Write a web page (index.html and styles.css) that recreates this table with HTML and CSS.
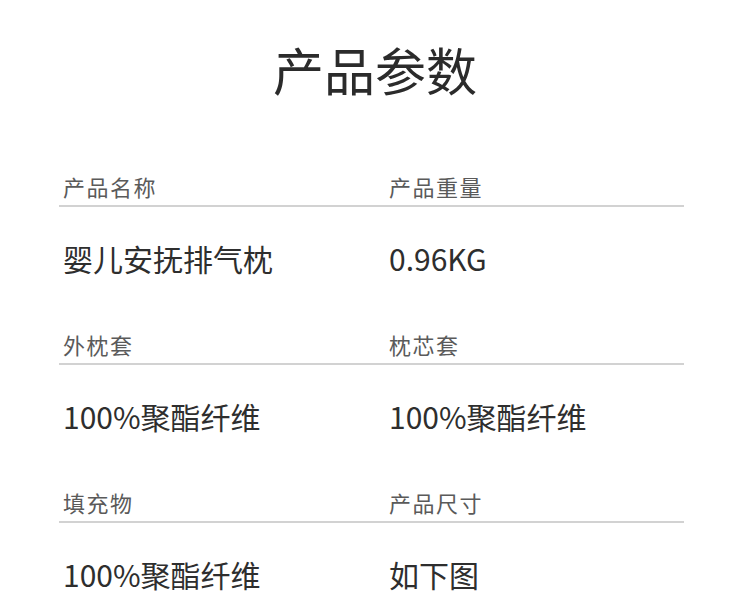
FILE: index.html
```html
<!DOCTYPE html>
<html lang="zh-CN">
<head>
<meta charset="utf-8">
<title>产品参数</title>
<link rel="stylesheet" href="styles.css">
</head>
<body>
<main class="page">
  <h1 class="title">产品参数</h1>
  <section class="params">
    <div class="row">
      <div class="labels">
        <span class="label">产品名称</span>
        <span class="label">产品重量</span>
      </div>
      <div class="values">
        <span class="value">婴儿安抚排气枕</span>
        <span class="value">0.96KG</span>
      </div>
    </div>
    <div class="row">
      <div class="labels">
        <span class="label">外枕套</span>
        <span class="label">枕芯套</span>
      </div>
      <div class="values">
        <span class="value">100%聚酯纤维</span>
        <span class="value">100%聚酯纤维</span>
      </div>
    </div>
    <div class="row">
      <div class="labels">
        <span class="label">填充物</span>
        <span class="label">产品尺寸</span>
      </div>
      <div class="values">
        <span class="value">100%聚酯纤维</span>
        <span class="value">如下图</span>
      </div>
    </div>
  </section>
</main>
</body>
</html>
```
FILE: styles.css
```css
html, body {
  margin: 0;
  padding: 0;
  background: #ffffff;
}

body {
  font-family: "Noto Sans CJK SC", "Noto Sans", sans-serif;
  color: #333333;
}

.page {
  width: 750px;
  height: 613px;
  overflow: hidden;
  padding-top: 39px;
  box-sizing: border-box;
}

.title {
  margin: 0;
  text-align: center;
  font-size: 51px;
  line-height: 60px;
  font-weight: 400;
  color: #2b2b2b;
}

.params {
  margin: 72px 66px 0 59px;
  display: flex;
  flex-direction: column;
  gap: 51px;
}

.labels,
.values {
  display: grid;
  grid-template-columns: 326px 1fr;
  padding-left: 4px;
}

.labels {
  padding-bottom: 4px;
  border-bottom: 2px solid #d2d2d2;
}

.values {
  margin-top: 31px;
}

.label {
  font-size: 22px;
  line-height: 30px;
  letter-spacing: 1.5px;
  color: #5a5a5a;
}

.value {
  font-size: 30px;
  line-height: 40px;
  color: #2e2e2e;
}
```
